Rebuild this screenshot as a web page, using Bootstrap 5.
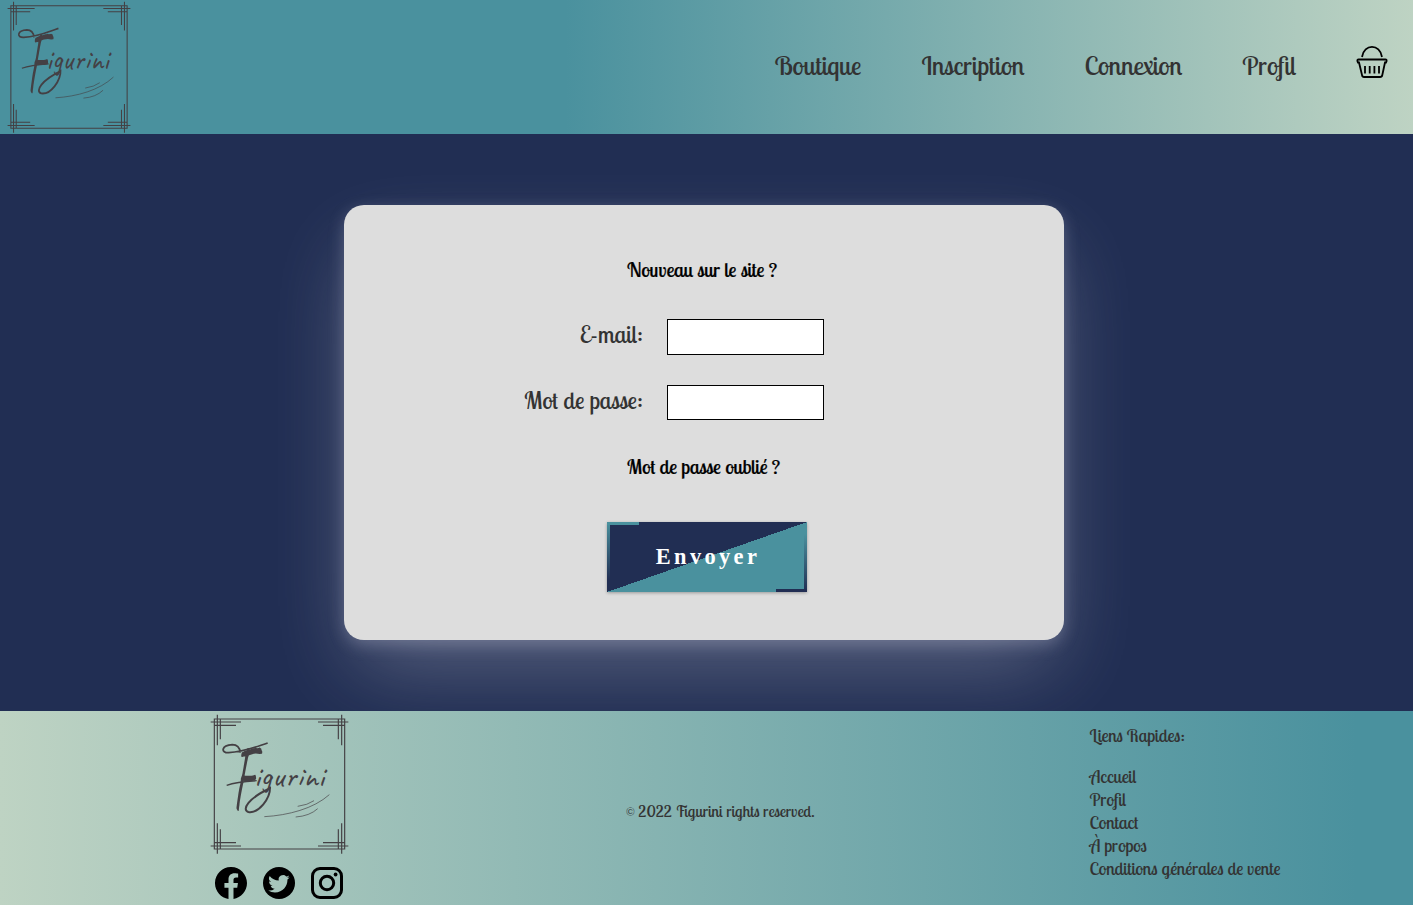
<!DOCTYPE html>
<html lang="fr">
<head>
<meta charset="utf-8">
<meta name="viewport" content="width=device-width, initial-scale=1">
<title>Figurini - Connexion</title>
<link href="https://cdn.jsdelivr.net/npm/bootstrap@5.3.0/dist/css/bootstrap.min.css" rel="stylesheet">
<style>
:root{--navy:#212e53;--teal:#4a919e;--sage:#bed3c3;--ink:#333}
body{background:var(--navy);color:var(--ink);font-family:"Lobster Two","Liberation Sans Narrow",sans-serif;height:905px;overflow:hidden}
a{color:inherit;text-decoration:none}
.site-head{height:134px;background:linear-gradient(to right,var(--teal) 40%,var(--sage));padding-right:25px}
.head-logo{width:124px;height:132px;margin:1px 0 0 7px}
.logo-text{fill:#444044;font-family:"Caveat","Dancing Script","Lato",sans-serif}
.menu{font-size:26.4px;line-height:30px;gap:60px}
.menu a{white-space:nowrap}
.site-main{height:577px;overflow:hidden;padding-top:71px;padding-right:5px}
.login{width:720px;height:435px;background:#ddd;border-radius:20px;box-shadow:0 5px 16px rgba(221,221,240,.26),0 36px 84px -10px rgba(221,221,230,.31)}
.login-link{color:#000;font-size:20px;line-height:24px;margin-left:283px;white-space:nowrap;-webkit-text-stroke:.2px}
.login label{width:299px;text-align:right;font-size:24px;line-height:30px;white-space:nowrap}
.login input{width:157px;margin-left:24px;border:1px solid #000;background:#fff;padding:0}
.send{width:200px;height:70px;margin-left:263px;border:0;padding:0 0 0 2px;color:#fff;font:bold 22.4px "Liberation Serif",serif;letter-spacing:3.36px;box-shadow:0 1px 3px rgba(0,0,0,.3);
background:linear-gradient(var(--teal),var(--teal)) 0 0/32px 3px no-repeat,linear-gradient(var(--navy),var(--navy)) 100% 100%/31px 3px no-repeat,linear-gradient(var(--teal),var(--navy)) 0 0/3px 58px no-repeat,linear-gradient(var(--teal),var(--navy)) 100% 100%/3px 58px no-repeat,linear-gradient(to bottom right,var(--navy) 50%,var(--teal) 50%)}
.site-foot{height:194px;background:linear-gradient(to right,var(--sage),var(--teal) 96%)}
.brand-col{width:140px;margin-left:210px;padding-top:3px}
.foot-logo{width:139px;height:140px}
.social{gap:16px;margin:13px 0 0 5px}
.rights{font-size:16px;line-height:20px;margin:90px 0 0 276px;width:190px;white-space:nowrap}
.quick{font-size:18px;line-height:23px;margin:13px 0 0 273.500px;white-space:nowrap}
</style>
</head>
<body class="d-flex flex-column">
<header class="site-head d-flex flex-shrink-0 justify-content-between align-items-start">
<a href="#"><svg class="head-logo d-block" viewBox="30 26 417 420" preserveAspectRatio="none">
<defs><g id="frame" fill="none" stroke="#444044" stroke-width="3.500">
<path d="M43 41H434V431H43ZM52 28V120M61 41V102M32 50H123M43 60H108M425 28V120M415 41V102M445 50H354M434 60H369M52 445V354M61 431V372M32 422H123M43 412H108M425 445V354M415 431V372M445 422H354M434 412H369"/>
<path d="M203 113C166 125 134 139 86 142C62 143 63 120 97 118Q118 118 121 142" stroke-width="5.500"/>
<path d="M80 240C108 230 138 228 170 226" stroke-width="4"/>
<path d="M210 244C212 280 176 325 145 320C124 313 145 278 212 248" stroke-width="6"/>
<path d="M193 334C265 330 341 310 388 268M293 303Q323 299 342 286M287 335Q329 332 353 310" stroke-width="2"/>
</g></defs>
<use href="#frame"/>
<text class="logo-text"><tspan x="98" y="311" font-size="286" textLength="62" lengthAdjust="spacingAndGlyphs">F</tspan><tspan x="162" y="246" font-size="98" textLength="210" lengthAdjust="spacing">igurini</tspan></text>
</svg></a>
<nav class="menu d-flex" style="margin-top:51px">
<a href="#">Boutique</a><a href="#">Inscription</a><a href="#">Connexion</a><a href="#">Profil</a>
<a href="#" aria-label="Panier"><svg width="32" height="34" viewBox="0 0 32 34" fill="none" stroke="#000" stroke-width="1.8" style="display:block;margin-top:-6px"><path d="M6 12C8 -1.500 24 -1.500 26 12M2.500 14.500H29.500Q30.800 14.500 30.600 16L30 17.500H29L26.300 30Q26 32 24 32H8Q6.300 32 6 30L3 17.500H2L1.400 16Q1.200 14.500 2.500 14.500ZM9 21V28.500M13.700 21V28.500M18.400 21V28.500M23 21V28.500"/></svg></a>
</nav>
</header>
<main class="site-main flex-shrink-0">
<form class="login mx-auto d-flex flex-column">
<a href="#" class="login-link" style="margin-top:53px">Nouveau sur le site ?</a>
<div class="d-flex" style="margin-top:37px"><label for="mail">E-mail:</label><input id="mail" type="email" style="height:36px"></div>
<div class="d-flex" style="margin-top:30px"><label for="pass">Mot de passe:</label><input id="pass" type="password" style="height:35px"></div>
<a href="#" class="login-link" style="margin-top:35px">Mot de passe oublié ?</a>
<button type="button" class="send" style="margin-top:43px">Envoyer</button>
</form>
</main>
<footer class="site-foot d-flex flex-shrink-0">
<div class="brand-col">
<svg class="foot-logo d-block" viewBox="30 26 417 420" preserveAspectRatio="none"><use href="#frame"/><text class="logo-text"><tspan x="98" y="311" font-size="286" textLength="62" lengthAdjust="spacingAndGlyphs">F</tspan><tspan x="162" y="246" font-size="98" textLength="210" lengthAdjust="spacing">igurini</tspan></text></svg>
<div class="social d-flex">
<svg width="32" height="32" viewBox="0 0 16 16" class="flex-shrink-0"><path d="M16 8.049c0-4.446-3.582-8.050-8-8.050C3.580 0-.002 3.603-.002 8.050c0 4.017 2.926 7.347 6.750 7.951v-5.625h-2.030V8.050H6.750V6.275c0-2.017 1.195-3.131 3.022-3.131.876 0 1.791.157 1.791.157v1.980h-1.009c-.993 0-1.303.621-1.303 1.258v1.510h2.218l-.354 2.326H9.250V16c3.824-.604 6.750-3.934 6.750-7.951z"/></svg>
<svg width="32" height="32" viewBox="0 0 32 32" class="flex-shrink-0"><mask id="bird"><rect width="32" height="32" fill="#fff"/><path transform="translate(5.200 5.400) scale(1.340)" d="M5.026 15c6.038 0 9.341-5.003 9.341-9.334 0-.14 0-.282-.006-.422A6.685 6.685 0 0 0 16 3.542a6.658 6.658 0 0 1-1.889.518 3.301 3.301 0 0 0 1.447-1.817 6.533 6.533 0 0 1-2.087.793A3.286 3.286 0 0 0 7.875 6.030a9.325 9.325 0 0 1-6.767-3.429 3.289 3.289 0 0 0 1.018 4.382A3.323 3.323 0 0 1 .64 6.575v.045a3.288 3.288 0 0 0 2.632 3.218 3.203 3.203 0 0 1-.865.115 3.230 3.230 0 0 1-.614-.057 3.283 3.283 0 0 0 3.067 2.277A6.588 6.588 0 0 1 .78 13.580a6.320 6.320 0 0 1-.78-.045A9.344 9.344 0 0 0 5.026 15z"/></mask><circle cx="16" cy="16" r="16" mask="url(#bird)"/></svg>
<svg width="32" height="32" viewBox="0 0 32 32" class="flex-shrink-0" fill="none" stroke="#000" stroke-width="3"><rect x="1.500" y="1.500" width="29" height="29" rx="7.500"/><circle cx="16" cy="16" r="6.700"/><circle cx="24.600" cy="7.500" r="1.900" fill="#000" stroke="none"/></svg>
</div>
</div>
<div class="rights">© 2022 Figurini rights reserved.</div>
<div class="quick">
<div style="margin-bottom:18px">Liens Rapides:</div>
<a href="#" class="d-block">Accueil</a><a href="#" class="d-block">Profil</a><a href="#" class="d-block">Contact</a><a href="#" class="d-block">À propos</a><a href="#" class="d-block">Conditions générales de vente</a>
</div>
</footer>
<script src="https://cdn.jsdelivr.net/npm/bootstrap@5.3.0/dist/js/bootstrap.bundle.min.js"></script>
</body>
</html>
